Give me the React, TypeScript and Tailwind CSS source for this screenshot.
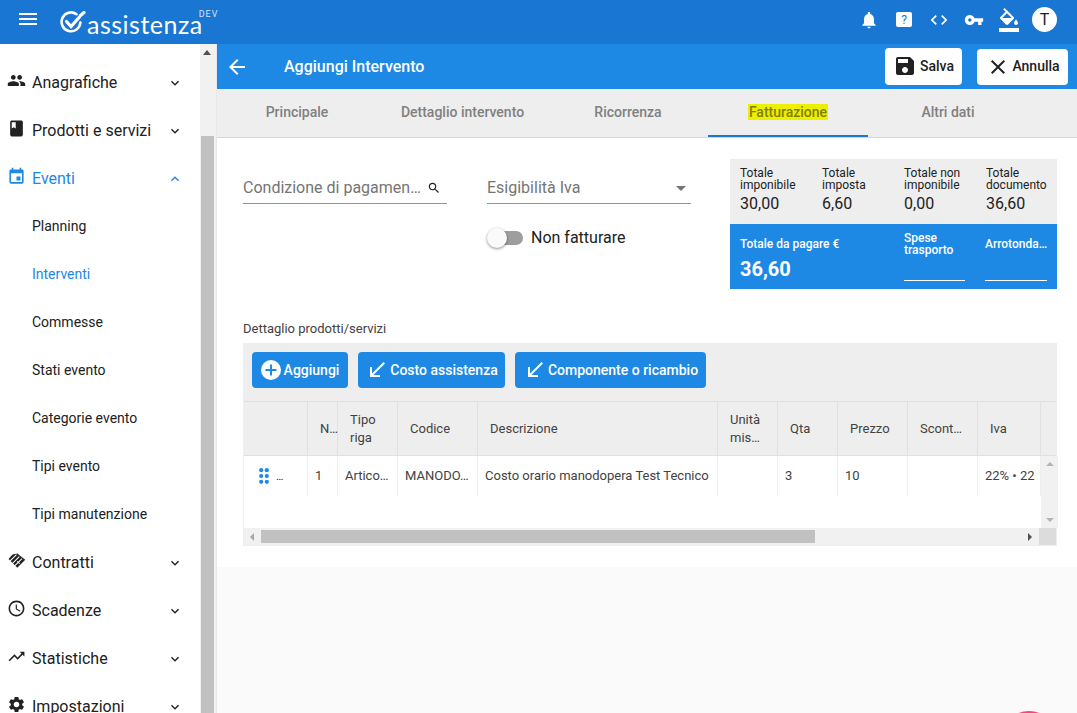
const P = {
  menu: "M3 18h18v-2H3v2zm0-5h18v-2H3v2zm0-7v2h18V6H3z",
  bell: "M12 22c1.1 0 2-.9 2-2h-4c0 1.1.89 2 2 2zm6-6v-5c0-3.07-1.64-5.64-4.5-6.32V4c0-.83-.67-1.5-1.5-1.5s-1.5.67-1.5 1.5v.68C7.63 5.36 6 7.92 6 11v5l-2 2v1h16v-1l-2-2z",
  code: "M9.4 16.6L4.8 12l4.6-4.6L8 6l-6 6 6 6 1.4-1.4zm5.2 0l4.6-4.6-4.6-4.6L16 6l6 6-6 6-1.4-1.4z",
  key: "M12.65 10C11.83 7.67 9.61 6 7 6c-3.31 0-6 2.69-6 6s2.69 6 6 6c2.61 0 4.83-1.67 5.65-4H17v4h4v-4h2v-4H12.65zM7 14c-1.1 0-2-.9-2-2s.9-2 2-2 2 .9 2 2-.9 2-2 2z",
  fill: "M16.56 8.94L7.62 0 6.21 1.41l2.38 2.38-5.15 5.15c-.59.59-.59 1.54 0 2.12l5.5 5.5c.29.29.68.44 1.06.44s.77-.15 1.06-.44l5.5-5.5c.59-.58.59-1.53 0-2.12zM5.21 10L10 5.21 14.79 10H5.21zM19 11.5s-2 2.17-2 3.5c0 1.1.9 2 2 2s2-.9 2-2c0-1.33-2-3.5-2-3.5zM2 20h20v4H2v-4z",
  back: "M20 11H7.83l5.59-5.59L12 4l-8 8 8 8 1.41-1.41L7.83 13H20v-2z",
  save: "M17 3H5c-1.11 0-2 .9-2 2v14c0 1.1.89 2 2 2h14c1.1 0 2-.9 2-2V7l-4-4zm-5 16c-1.66 0-3-1.34-3-3s1.34-3 3-3 3 1.34 3 3-1.34 3-3 3zm3-10H5V5h10v4z",
  close: "M19 6.41L17.59 5 12 10.59 6.41 5 5 6.41 10.59 12 5 17.59 6.41 19 12 13.41 17.59 19 19 17.59 13.41 12z",
  people: "M16 11c1.66 0 2.99-1.34 2.99-3S17.66 5 16 5c-1.66 0-3 1.34-3 3s1.34 3 3 3zm-8 0c1.66 0 2.99-1.34 2.99-3S9.66 5 8 5C6.34 5 5 6.34 5 8s1.34 3 3 3zm0 2c-2.33 0-7 1.17-7 3.5V19h14v-2.5c0-2.33-4.67-3.5-7-3.5zm8 0c-.29 0-.62.02-.97.05 1.16.84 1.97 1.97 1.97 3.45V19h6v-2.5c0-2.33-4.67-3.5-7-3.5z",
  book: "M18 2H6c-1.1 0-2 .9-2 2v16c0 1.1.9 2 2 2h12c1.1 0 2-.9 2-2V4c0-1.1-.9-2-2-2zM6 4h5v8l-2.5-1.5L6 12V4z",
  event: "M17 12h-5v5h5v-5zM16 1v2H8V1H6v2H5c-1.11 0-1.99.9-1.99 2L3 19c0 1.1.89 2 2 2h14c1.1 0 2-.9 2-2V5c0-1.1-.9-2-2-2h-1V1h-2zm3 18H5V8h14v11z",
  clock: "M11.99 2C6.47 2 2 6.48 2 12s4.47 10 9.99 10C17.52 22 22 17.52 22 12S17.52 2 11.99 2zM12 20c-4.42 0-8-3.58-8-8s3.58-8 8-8 8 3.58 8 8-3.58 8-8 8zm.5-13H11v6l5.25 3.15.75-1.23-4.5-2.67z",
  trend: "M16 6l2.29 2.29-4.88 4.88-4-4L2 16.59 3.41 18l6-6 4 4 6.3-6.29L22 12V6z",
  gear: "M19.14 12.94c.04-.3.06-.61.06-.94 0-.32-.02-.64-.07-.94l2.03-1.58c.18-.14.23-.41.12-.61l-1.92-3.32c-.12-.22-.37-.29-.59-.22l-2.39.96c-.5-.38-1.03-.7-1.62-.94l-.36-2.54c-.04-.24-.24-.41-.48-.41h-3.84c-.24 0-.43.17-.47.41l-.36 2.54c-.59.24-1.13.57-1.62.94l-2.39-.96c-.22-.08-.47 0-.59.22L2.74 8.87c-.12.21-.08.47.12.61l2.03 1.58c-.05.3-.09.63-.09.94s.02.64.07.94l-2.03 1.58c-.18.14-.23.41-.12.61l1.92 3.32c.12.22.37.29.59.22l2.39-.96c.5.38 1.03.7 1.62.94l.36 2.54c.05.24.24.41.48.41h3.84c.24 0 .44-.17.47-.41l.36-2.54c.59-.24 1.13-.56 1.62-.94l2.39.96c.22.08.47 0 .59-.22l1.92-3.32c.12-.22.07-.47-.12-.61l-2.01-1.58zM12 15.6c-1.98 0-3.6-1.62-3.6-3.6s1.62-3.6 3.6-3.6 3.6 1.62 3.6 3.6-1.62 3.6-3.6 3.6z",
  search: "M15.5 14h-.79l-.28-.27C15.41 12.59 16 11.11 16 9.5 16 5.91 13.09 3 9.5 3S3 5.91 3 9.5 5.91 16 9.5 16c1.61 0 3.09-.59 4.23-1.57l.27.28v.79l5 4.99L20.49 19l-4.99-5zm-6 0C7.01 14 5 11.99 5 9.5S7.01 5 9.5 5 14 7.01 14 9.5 11.99 14 9.5 14z",
  southWest: "M20 5.41 18.59 4 7 15.59V9H5v10h10v-2H8.41z",
  down: "M16.59 8.59L12 13.17 7.41 8.59 6 10l6 6 6-6z",
  up: "M12 8l-6 6 1.41 1.41L12 10.83l4.59 4.58L18 14z",
};

function Icon({ d, className }: { d: string; className: string }) {
  return (
    <svg viewBox="0 0 24 24" className={className} fill="currentColor">
      <path d={d} />
    </svg>
  );
}

function Handshake({ className }: { className: string }) {
  return (
    <svg viewBox="0 0 24 24" className={className} fill="none" stroke="currentColor">
      <path d="M13 3 23 11 13 21 2 10 7 4.500Z" fill="currentColor" stroke="none" />
      <path d="M4 12.500 12 4.500M7 15.500 15.500 7M10 18.500 19 9.500" stroke="#fff" strokeWidth="1.300" />
      <path d="M13 13 16 16" stroke="#fff" strokeWidth="1.300" />
    </svg>
  );
}

function Logo() {
  return (
    <div className="ml-[20px] flex h-[44px] items-start self-start text-white">
      <svg viewBox="0 0 26 22" className="mt-[11px] h-[22px] w-[26px]" fill="none" stroke="currentColor" strokeWidth="2.600" strokeLinecap="round">
        <path d="M16.500 3.200A9.400 9.400 0 1 0 20.400 11.500" />
        <path d="M6.500 10.500 11 15.500 19.500 6" strokeWidth="3.200" />
        <path d="M20.500 4.500 24 1.500" strokeWidth="3.200" />
      </svg>
      <span className="ml-[1px] mt-[18px] text-[25px] font-normal leading-[12px] tracking-[0.5px] font-['Lato',sans-serif]">assistenza</span>
      <span className="-ml-[4px] mt-[10px] text-[9px] leading-[8px] tracking-[1px] text-[#d4e6f8]">DEV</span>
    </div>
  );
}

const navTop = [
  { label: "Anagrafiche", icon: P.people },
  { label: "Prodotti e servizi", icon: P.book },
];
const subItems = ["Planning", "Interventi", "Commesse", "Stati evento", "Categorie evento", "Tipi evento", "Tipi manutenzione"];
const navBottom = [
  { label: "Scadenze", icon: P.clock },
  { label: "Statistiche", icon: P.trend },
  { label: "Impostazioni", icon: P.gear },
];

function NavRow({ label, icon, active }: { label: string; icon: React.ReactNode; active?: boolean }) {
  return (
    <div className={`flex h-[48px] shrink-0 items-center pl-[7px] pr-[17px] pt-[2px] ${active ? "text-[#1e88e5]" : "text-[#212121]"}`}>
      <span className="mb-[5px] w-[25px]">{icon}</span>
      <span className="text-[16px]">{label}</span>
      <Icon d={active ? P.up : P.down} className="ml-auto h-[16px] w-[16px]" />
    </div>
  );
}

function Sidebar() {
  return (
    <div className="flex w-[200px] shrink-0 flex-col overflow-hidden bg-white pt-[14px]">
      {navTop.map((n) => (
        <NavRow key={n.label} label={n.label} icon={<Icon d={n.icon} className="h-[19px] w-[19px]" />} />
      ))}
      <NavRow active label="Eventi" icon={<Icon d={P.event} className="h-[19px] w-[19px]" />} />
      {subItems.map((s) => (
        <div key={s} className={`flex h-[48px] shrink-0 items-center pl-[32px] text-[14px] ${s === "Interventi" ? "text-[#1e88e5]" : "text-[#212121]"}`}>
          {s}
        </div>
      ))}
      <NavRow label="Contratti" icon={<Handshake className="h-[19px] w-[19px]" />} />
      {navBottom.map((n) => (
        <NavRow key={n.label} label={n.label} icon={<Icon d={n.icon} className="h-[19px] w-[19px]" />} />
      ))}
    </div>
  );
}

function PageScrollbar() {
  return (
    <div className="flex w-[17px] shrink-0 flex-col items-center border-r border-[#e8e8e8] bg-[#f1f1f1] pr-[2px]">
      <div className="mt-[6px] h-0 w-0 border-x-[4px] border-b-[5px] border-x-transparent border-b-[#505050]" />
      <div className="mt-[81px] w-[13px] flex-1 bg-[#c1c1c1]" />
    </div>
  );
}

const tabs = [
  { label: "Principale", w: "w-[160px]" },
  { label: "Dettaglio intervento", w: "w-[171px]" },
  { label: "Ricorrenza", w: "w-[160px]" },
  { label: "Fatturazione", w: "w-[160px]", active: true },
  { label: "Altri dati", w: "w-[160px]" },
];

function Tabs() {
  return (
    <div className="flex h-[49px] shrink-0 border-b border-[#d6d6d6] bg-[#eeeeee]">
      {tabs.map((t) =>
        t.active ? (
          <div key={t.label} className={`${t.w} flex items-center justify-center border-b-2 border-[#1976d2] pb-[1px] text-[14px] font-medium`}>
            <span className="bg-[#eeee00] px-[1px] leading-[16px] text-[#808000]">{t.label}</span>
          </div>
        ) : (
          <div key={t.label} className={`${t.w} flex items-center justify-center pb-[1px] text-[14px] font-medium text-[#808080]`}>
            {t.label}
          </div>
        ),
      )}
    </div>
  );
}

function Totals() {
  const top = [
    { a: "Totale", b: "imponibile", v: "30,00" },
    { a: "Totale", b: "imposta", v: "6,60" },
    { a: "Totale non", b: "imponibile", v: "0,00" },
    { a: "Totale", b: "documento", v: "36,60" },
  ];
  return (
    <div className="w-[327px] shrink-0">
      <div className="flex h-[65px] bg-[#eeeeee] pl-[10px] pt-[8px] text-[#212121]">
        {top.map((c) => (
          <div key={c.a + c.b} className="w-[82px] shrink-0">
            <div className="text-[12px] leading-[12px]">{c.a}<br />{c.b}</div>
            <div className="mt-[3px] text-[16px] leading-[20px]">{c.v}</div>
          </div>
        ))}
      </div>
      <div className="flex h-[65px] bg-[#1e88e5] pl-[10px] text-white">
        <div className="w-[164px] pt-[14px]">
          <div className="text-[12px] font-medium leading-[12px]">Totale da pagare €</div>
          <div className="mt-[7px] text-[20px] font-bold leading-[24px]">36,60</div>
        </div>
        <div className="w-[61px] pt-[8px]">
          <div className="text-[12px] font-medium leading-[12px]">Spese<br />trasporto</div>
          <div className="mt-[24px] h-px bg-white" />
        </div>
        <div className="ml-[20px] w-[62px] pt-[14px]">
          <div className="whitespace-nowrap text-[12px] font-medium leading-[12px]">Arrotonda…</div>
          <div className="mt-[30px] h-px bg-white" />
        </div>
      </div>
    </div>
  );
}

function Form() {
  return (
    <div className="flex gap-[40px] pt-[14px]">
      <div className="flex h-[31px] w-[204px] items-start border-b border-[#949494] text-[16px] text-[#757575]">
        <span className="leading-[30px]">Condizione di pagamen…</span>
        <Icon d={P.search} className="ml-auto mr-[6px] mt-[8px] h-[14px] w-[14px] text-[#212121]" />
      </div>
      <div>
        <div className="flex h-[31px] w-[204px] items-start border-b border-[#949494] text-[16px] text-[#757575]">
          <span className="leading-[30px]">Esigibilità Iva</span>
          <div className="ml-auto mr-[5px] mt-[13px] h-0 w-0 border-x-[5px] border-t-[5px] border-x-transparent border-t-[#757575]" />
        </div>
        <div className="mt-[24px] flex items-center">
          <div className="relative ml-[3px] h-[14px] w-[33px] rounded-full bg-[#9e9e9e]">
            <div className="absolute -left-[3px] -top-[3px] h-[20px] w-[20px] rounded-full bg-[#fafafa] shadow-[0_1px_3px_rgba(0,0,0,0.45)]" />
          </div>
          <span className="ml-[8px] text-[16px] leading-[20px] text-[#212121]">Non fatturare</span>
        </div>
      </div>
    </div>
  );
}

const cols = [
  { w: "w-[64px]", head: "", cell: "" },
  { w: "w-[30px]", head: "N…", cell: "1" },
  { w: "w-[60px]", head: "Tipo riga", cell: "Artico…" },
  { w: "w-[80px]", head: "Codice", cell: "MANODO…" },
  { w: "w-[240px]", head: "Descrizione", cell: "Costo orario manodopera Test Tecnico" },
  { w: "w-[60px]", head: "Unità mis…", cell: "" },
  { w: "w-[60px]", head: "Qta", cell: "3" },
  { w: "w-[70px]", head: "Prezzo", cell: "10" },
  { w: "w-[70px]", head: "Scont…", cell: "" },
  { w: "w-[63px]", head: "Iva", cell: "22% • 22" },
];

function DragDots() {
  return (
    <svg viewBox="0 0 10 16" className="h-[16px] w-[10px] text-[#1e88e5]" fill="currentColor">
      {[2.200, 7.800].map((x) =>
        [2.200, 8, 13.800].map((y) => <circle key={`${x}-${y}`} cx={x} cy={y} r="2.100" />),
      )}
    </svg>
  );
}

function Table() {
  return (
    <div className="border-x border-b border-[#eeeeee] text-[13px] text-[#424242]">
      <div className="flex h-[55px] border-y border-[#e0e0e0] bg-[#eeeeee]">
        {cols.map((c, i) => (
          <div key={c.w + i} className={`${c.w} flex shrink-0 items-center border-r border-[#e0e0e0] pl-[12px] leading-[18px]`}>
            <span>{c.head}</span>
          </div>
        ))}
      </div>
      <div className="flex h-[72px]">
        <div className="flex h-[40px] items-start">
          {cols.map((c, i) => (
            <div key={c.w + i} className={`${c.w} flex h-[40px] shrink-0 items-center whitespace-nowrap border-r border-[#eeeeee] pl-[7px]`}>
              {i === 0 ? (
                <div className="ml-[8px] flex items-center gap-[7px]">
                  <DragDots />
                  <span className="pt-[2px] text-[11px] text-[#212121]">…</span>
                </div>
              ) : (
                <span>{c.cell}</span>
              )}
            </div>
          ))}
        </div>
        <div className="ml-auto flex w-[17px] shrink-0 flex-col items-center justify-between bg-[#f1f1f1] py-[6px]">
          <div className="h-0 w-0 border-x-[4px] border-b-[4px] border-x-transparent border-b-[#b5b5b5]" />
          <div className="h-0 w-0 border-x-[4px] border-t-[4px] border-x-transparent border-t-[#b5b5b5]" />
        </div>
      </div>
      <div className="flex h-[17px] items-center bg-[#f1f1f1]">
        <div className="ml-[6px] h-0 w-0 border-y-[4px] border-r-[4px] border-y-transparent border-r-[#a8a8a8]" />
        <div className="ml-[7px] h-[13px] w-[554px] bg-[#c1c1c1]" />
        <div className="ml-[213px] h-0 w-0 border-y-[4px] border-l-[4px] border-y-transparent border-l-[#505050]" />
        <div className="ml-auto h-[17px] w-[17px] bg-[#dcdcdc]" />
      </div>
    </div>
  );
}

function ToolButton({ icon, label, w }: { icon: React.ReactNode; label: string; w: string }) {
  return (
    <button className={`${w} flex h-[36px] items-center justify-center rounded bg-[#1e88e5] text-[14px] font-medium text-white`}>
      {icon}
      {label}
    </button>
  );
}

export default function App() {
  return (
    <div className="relative flex h-screen w-full flex-col overflow-hidden bg-white font-['Roboto',sans-serif]">
      <header className="flex h-[44px] shrink-0 items-center bg-[#1976d2] text-white">
        <Icon d={P.menu} className="mb-[6px] ml-[16px] h-[24px] w-[24px]" />
        <Logo />
        <div className="ml-auto flex items-center pb-[5px] pr-[20px]">
          <Icon d={P.bell} className="h-[20px] w-[20px]" />
          <div className="ml-[17px] flex h-[15px] w-[16px] items-center justify-center rounded-[2px] bg-white text-[12px] text-[#1976d2]">?</div>
          <Icon d={P.code} className="ml-[17px] h-[20px] w-[20px]" />
          <Icon d={P.key} className="ml-[15px] h-[20px] w-[20px]" />
          <Icon d={P.fill} className="ml-[13px] h-[24px] w-[24px]" />
          <div className="ml-[11px] flex h-[25px] w-[25px] items-center justify-center rounded-full bg-white text-[16px] text-[#212121]">T</div>
        </div>
      </header>
      <div className="flex min-h-0 flex-1">
        <Sidebar />
        <PageScrollbar />
        <main className="flex min-w-0 flex-1 flex-col bg-[#fafafa]">
          <div className="flex h-[45px] shrink-0 items-center bg-[#1e88e5] pr-[9px] text-white">
            <Icon d={P.back} className="ml-[8px] h-[24px] w-[24px]" />
            <span className="ml-[35px] text-[16px] font-medium">Aggiungi Intervento</span>
            <button className="ml-auto flex h-[37px] w-[77px] items-center justify-center rounded bg-white pb-[1px] text-[14px] font-medium text-[#212121]">
              <Icon d={P.save} className="mr-[3px] h-[24px] w-[24px]" />
              Salva
            </button>
            <button className="ml-[15px] flex h-[36px] w-[91px] items-center justify-center rounded bg-white pl-[1px] text-[14px] font-medium text-[#212121]">
              <Icon d={P.close} className="mr-[2px] h-[24px] w-[24px]" />
              Annulla
            </button>
          </div>
          <Tabs />
          <div className="h-[429px] shrink-0 bg-white pl-[26px] pr-[20px] pt-[21px]">
            <div className="flex justify-between">
              <Form />
              <Totals />
            </div>
            <div className="mt-[32px] text-[13px] leading-[15px] text-[#424242]">Dettaglio prodotti/servizi</div>
            <div className="mt-[7px] flex h-[58px] items-start gap-[10px] bg-[#eeeeee] pl-[9px] pt-[9px]">
              <ToolButton
                w="w-[96px]"
                label="Aggiungi"
                icon={
                  <svg viewBox="0 0 20 20" className="mr-[3px] h-[20px] w-[20px]">
                    <circle cx="10" cy="10" r="10" fill="#fff" />
                    <path d="M9 4.500h2V9h4.500v2H11v4.500H9V11H4.500V9H9z" fill="#1e88e5" />
                  </svg>
                }
              />
              <ToolButton w="w-[147px]" label="Costo assistenza" icon={<Icon d={P.southWest} className="mr-[1px] h-[24px] w-[24px]" />} />
              <ToolButton w="w-[191px]" label="Componente o ricambio" icon={<Icon d={P.southWest} className="mr-[1px] h-[24px] w-[24px]" />} />
            </div>
            <Table />
          </div>
        </main>
      </div>
      <div className="absolute left-[1001px] top-[711px] h-[56px] w-[56px] rounded-full bg-[#ff4081]" />
    </div>
  );
}
